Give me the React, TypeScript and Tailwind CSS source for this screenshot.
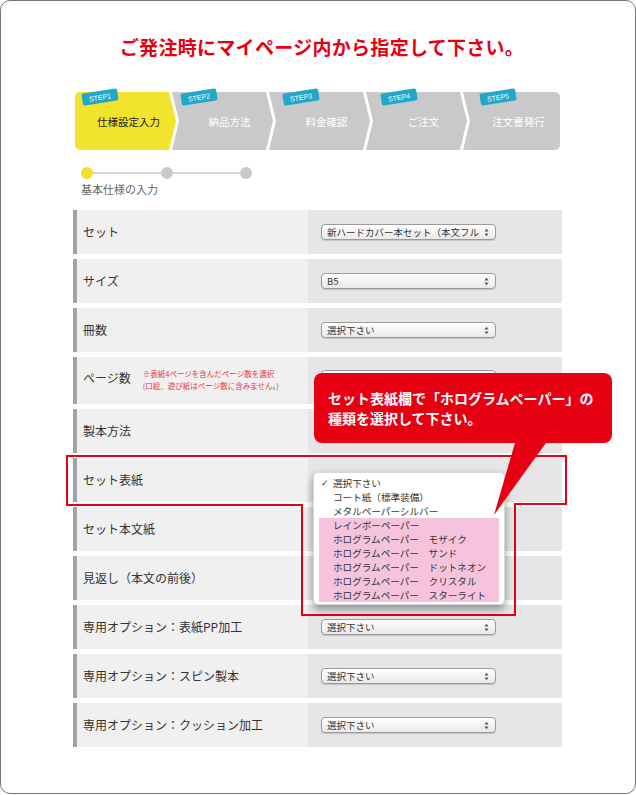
import React from "react";

const steps = [
  {
    label: "仕様設定入力",
    step: "STEP1",
    cls: "w-[101px] pl-[6px] bg-[#f2e42c] text-[#222] [clip-path:polygon(0_0,calc(100%_-_7px)_0,100%_50%,calc(100%_-_7px)_100%,0_100%)]",
    badge: "left-[7px]",
  },
  {
    label: "納品方法",
    step: "STEP2",
    cls: "w-[101px] -ml-[4px] pl-[14px] bg-[#c9c9cb] text-white [clip-path:polygon(0_0,calc(100%_-_7px)_0,100%_50%,calc(100%_-_7px)_100%,0_100%,7px_50%)]",
    badge: "left-[106px]",
  },
  {
    label: "料金確認",
    step: "STEP3",
    cls: "w-[101px] -ml-[4px] pl-[14px] bg-[#c9c9cb] text-white [clip-path:polygon(0_0,calc(100%_-_7px)_0,100%_50%,calc(100%_-_7px)_100%,0_100%,7px_50%)]",
    badge: "left-[208px]",
  },
  {
    label: "ご注文",
    step: "STEP4",
    cls: "w-[101px] -ml-[4px] pl-[14px] bg-[#c9c9cb] text-white [clip-path:polygon(0_0,calc(100%_-_7px)_0,100%_50%,calc(100%_-_7px)_100%,0_100%,7px_50%)]",
    badge: "left-[306px]",
  },
  {
    label: "注文書発行",
    step: "STEP5",
    cls: "w-[97px] -ml-[4px] pl-[14px] bg-[#c9c9cb] text-white [clip-path:polygon(0_0,100%_0,100%_100%,0_100%,7px_50%)]",
    badge: "left-[405px]",
  },
];

const rows: { label: string; value: string; note?: boolean; covered?: boolean }[] = [
  { label: "セット", value: "新ハードカバー本セット（本文フルカラー）" },
  { label: "サイズ", value: "B5" },
  { label: "冊数", value: "選択下さい" },
  { label: "ページ数", value: "選択下さい", note: true },
  { label: "製本方法", value: "選択下さい", covered: true },
  { label: "セット表紙", value: "選択下さい", covered: true },
  { label: "セット本文紙", value: "選択下さい", covered: true },
  { label: "見返し（本文の前後）", value: "選択下さい", covered: true },
  { label: "専用オプション：表紙PP加工", value: "選択下さい" },
  { label: "専用オプション：スピン製本", value: "選択下さい" },
  { label: "専用オプション：クッション加工", value: "選択下さい" },
];

const plainItems = ["選択下さい", "コート紙（標準装備）", "メタルペーパーシルバー"];
const pinkItems = [
  "レインボーペーパー",
  "ホログラムペーパー　モザイク",
  "ホログラムペーパー　サンド",
  "ホログラムペーパー　ドットネオン",
  "ホログラムペーパー　クリスタル",
  "ホログラムペーパー　スターライト",
];

function Arrows() {
  return (
    <svg width="5" height="9" viewBox="0 0 5 9" className="shrink-0">
      <path d="M0.5 3.6 L2.5 0.8 L4.5 3.6 Z" fill="#555" />
      <path d="M0.5 5.4 L2.5 8.2 L4.5 5.4 Z" fill="#555" />
    </svg>
  );
}

function Select({ value, covered }: { value: string; covered?: boolean }) {
  return (
    <div
      className={`w-[175px] h-[16px] rounded-[4px] border border-[#9b9b9b] bg-gradient-to-b from-white to-[#e9e9e9] shadow-[0_1px_1px_rgba(0,0,0,0.15)] flex items-center pl-[5px] pr-[6px] gap-[4px] ${covered ? "invisible" : ""}`}
    >
      <span className="flex-1 overflow-hidden whitespace-nowrap text-[9.5px] leading-[14px] text-[#333]">
        {value}
      </span>
      <Arrows />
    </div>
  );
}

export default function App() {
  return (
    <div className="w-[636px] h-[795px] bg-white font-['Noto_Sans_CJK_JP','Noto_Sans',sans-serif]">
      <div className="relative w-[636px] h-[794px] border border-[#777] rounded-[10px] bg-white">
        <div className="mt-[34px] h-[24px] leading-[24px] text-center pl-[8px] text-[19px] font-bold text-[#e60012] tracking-[0.3px]">
          ご発注時にマイページ内から指定して下さい。
        </div>

        {/* Steps bar */}
        <div className="ml-[74px] mt-[33px] relative w-[485px] h-[58px]">
          <div className="flex h-full rounded-[5px] overflow-hidden">
            {steps.map((s) => (
              <div
                key={s.step}
                className={`h-full shrink-0 flex items-center justify-center pt-[2px] text-[10.5px] ${s.cls}`}
              >
                {s.label}
              </div>
            ))}
          </div>
          {steps.map((s) => (
            <div
              key={s.step + "b"}
              className={`absolute top-[-1px] ${s.badge} w-[36px] h-[12px] rounded-[2px] bg-[#22a8c6] rotate-[-9deg] flex items-center justify-center text-[7px] leading-none text-white font-['Liberation_Sans',sans-serif]`}
            >
              {s.step}
            </div>
          ))}
        </div>

        {/* progress dots */}
        <div className="ml-[80px] mt-[17px] w-[171px] h-[12px] flex items-center">
          <div className="w-[12px] h-[12px] rounded-full bg-[#f2e02e] shrink-0" />
          <div className="flex-1 h-[2px] bg-[#d6d6d6]" />
          <div className="w-[12px] h-[12px] rounded-full bg-[#c9c9c9] shrink-0" />
          <div className="flex-1 h-[2px] bg-[#d6d6d6]" />
          <div className="w-[12px] h-[12px] rounded-full bg-[#c9c9c9] shrink-0" />
        </div>
        <div className="ml-[80px] mt-[3px] text-[11px] leading-[14px] text-[#666]">基本仕様の入力</div>

        {/* rows */}
        <div className="ml-[72px] mt-[14px] w-[489px] flex flex-col gap-[5px]">
          {rows.map((r) => (
            <div key={r.label} className={`flex ${r.note ? "h-[47px]" : "h-[44px]"}`}>
              <div
                className={`w-[235px] shrink-0 bg-[#f0f0f0] border-l-[4px] border-[#a3a3a3] flex items-center pl-[6px] ${r.note ? "pb-[5px]" : ""}`}
              >
                <span className="text-[12px] leading-[16px] text-[#333] whitespace-nowrap">{r.label}</span>
                {r.note && (
                  <div className="ml-[12px] mt-[3px] text-[7.5px] leading-[12px] text-[#e8383d] whitespace-nowrap">
                    <div>※表紙4ページを含んだページ数を選択</div>
                    <div>(口絵、遊び紙はページ数に含みません。)</div>
                  </div>
                )}
              </div>
              <div className={`flex-1 bg-[#e6e6e6] flex items-center pl-[13px] ${r.note ? "pb-[5px]" : ""}`}>
                <Select value={r.value} covered={r.covered} />
              </div>
            </div>
          ))}
        </div>

        {/* red outline */}
        <svg
          className="absolute left-[-1px] top-[-1px] pointer-events-none"
          width="636"
          height="795"
          viewBox="0 0 636 795"
        >
          <path
            d="M67 456 H566 V504 H515 V615 H302 V505 H67 Z"
            fill="none"
            stroke="#e60012"
            strokeWidth="2"
          />
        </svg>

        {/* dropdown */}
        <div className="absolute left-[312px] top-[471px] w-[192px] h-[133px] rounded-[5px] bg-white border border-[#d8d8d8] shadow-[0_4px_9px_rgba(0,0,0,0.4)] pt-[3px] text-[9.6px] text-[#333]">
          {plainItems.map((t, i) => (
            <div key={t} className="h-[14px] leading-[14px] flex pl-[7px] whitespace-nowrap">
              <span className="w-[12px] shrink-0 text-[9px] font-['DejaVu_Sans',sans-serif]">{i === 0 ? "✓" : ""}</span>
              <span>{t}</span>
            </div>
          ))}
          <div className="mx-[5px] bg-[#f5c4dc]">
            {pinkItems.map((t) => (
              <div key={t} className="h-[14px] leading-[14px] pl-[14px] whitespace-nowrap">
                {t}
              </div>
            ))}
          </div>
        </div>

        {/* callout */}
        <div className="absolute left-[313px] top-[372px] w-[298px] h-[70px] rounded-[8px] bg-[#e60012] flex flex-col justify-center pl-[14px] text-white font-bold text-[14px] leading-[20px] whitespace-nowrap">
          <div>セット表紙欄で「ホログラムペーパー」の</div>
          <div>種類を選択して下さい。</div>
        </div>
        <svg
          className="absolute left-[-1px] top-[-1px] pointer-events-none"
          width="636"
          height="795"
          viewBox="0 0 636 795"
        >
          <polygon points="517,436 551,436 494,515" fill="#e60012" />
        </svg>
      </div>
    </div>
  );
}
